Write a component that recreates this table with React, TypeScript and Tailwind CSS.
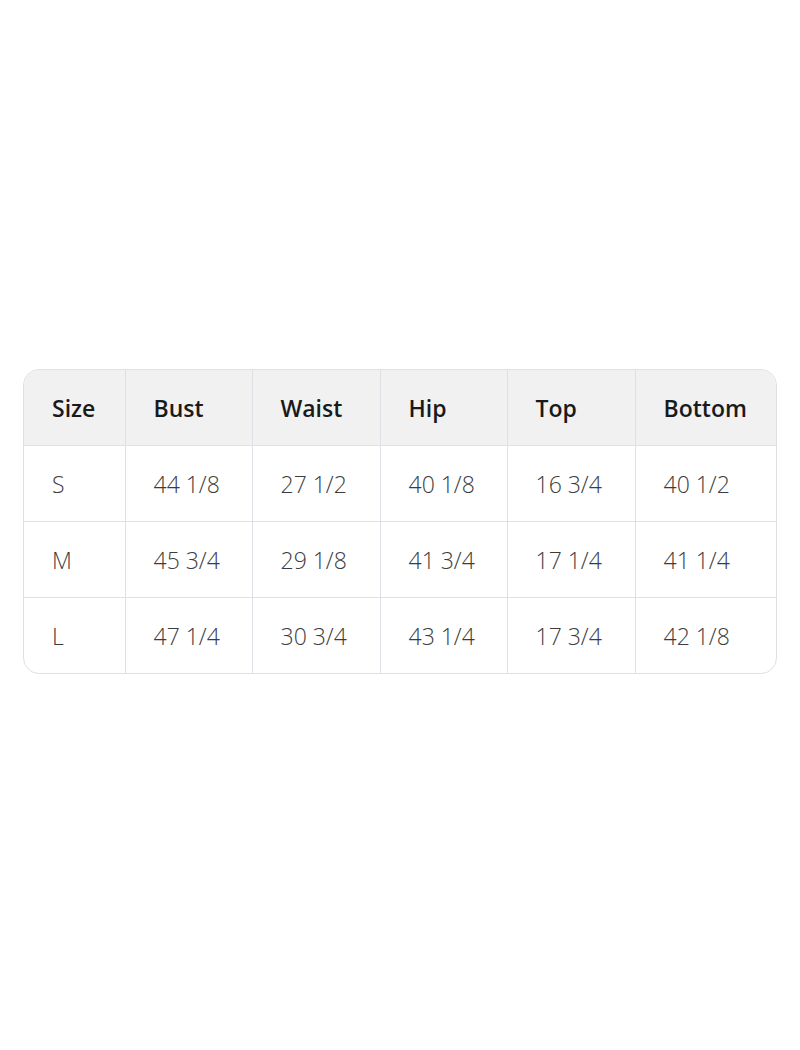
import React from "react";

const headers = ["Size", "Bust", "Waist", "Hip", "Top", "Bottom"];
const rows = [
  ["S", "44 1/8", "27 1/2", "40 1/8", "16 3/4", "40 1/2"],
  ["M", "45 3/4", "29 1/8", "41 3/4", "17 1/4", "41 1/4"],
  ["L", "47 1/4", "30 3/4", "43 1/4", "17 3/4", "42 1/8"],
];
const widths = ["w-[101px]", "w-[127px]", "w-[128px]", "w-[127px]", "w-[128px]", "w-[141px]"];

export default function App() {
  return (
    <div
      className="min-h-screen bg-white px-[23px] pt-[369px]"
      style={{ fontFamily: '"Open Sans", "Noto Sans", sans-serif' }}
    >
      <div className="w-[754px] overflow-hidden rounded-[16px] border border-[#dde1e6]">
        <table className="w-full table-fixed border-collapse">
          <thead>
            <tr className="h-[75px] bg-[#f1f1f1]">
              {headers.map((h, i) => (
                <th
                  key={h}
                  className={`${widths[i]} pl-[28px] pt-[2px] text-left text-[23px] font-semibold text-[#1a1a1a] ${i > 0 ? "border-l border-[#dde1e6]" : ""}`}
                >
                  {h}
                </th>
              ))}
            </tr>
          </thead>
          <tbody>
            {rows.map((r) => (
              <tr key={r[0]} className="h-[76px] border-t border-[#dde1e6]">
                {r.map((c, i) => (
                  <td
                    key={i}
                    className={`pl-[28px] pt-[2px] text-left text-[23px] font-light text-[#3c3c3c] ${i > 0 ? "border-l border-[#dde1e6]" : ""}`}
                  >
                    {c}
                  </td>
                ))}
              </tr>
            ))}
          </tbody>
        </table>
      </div>
    </div>
  );
}
